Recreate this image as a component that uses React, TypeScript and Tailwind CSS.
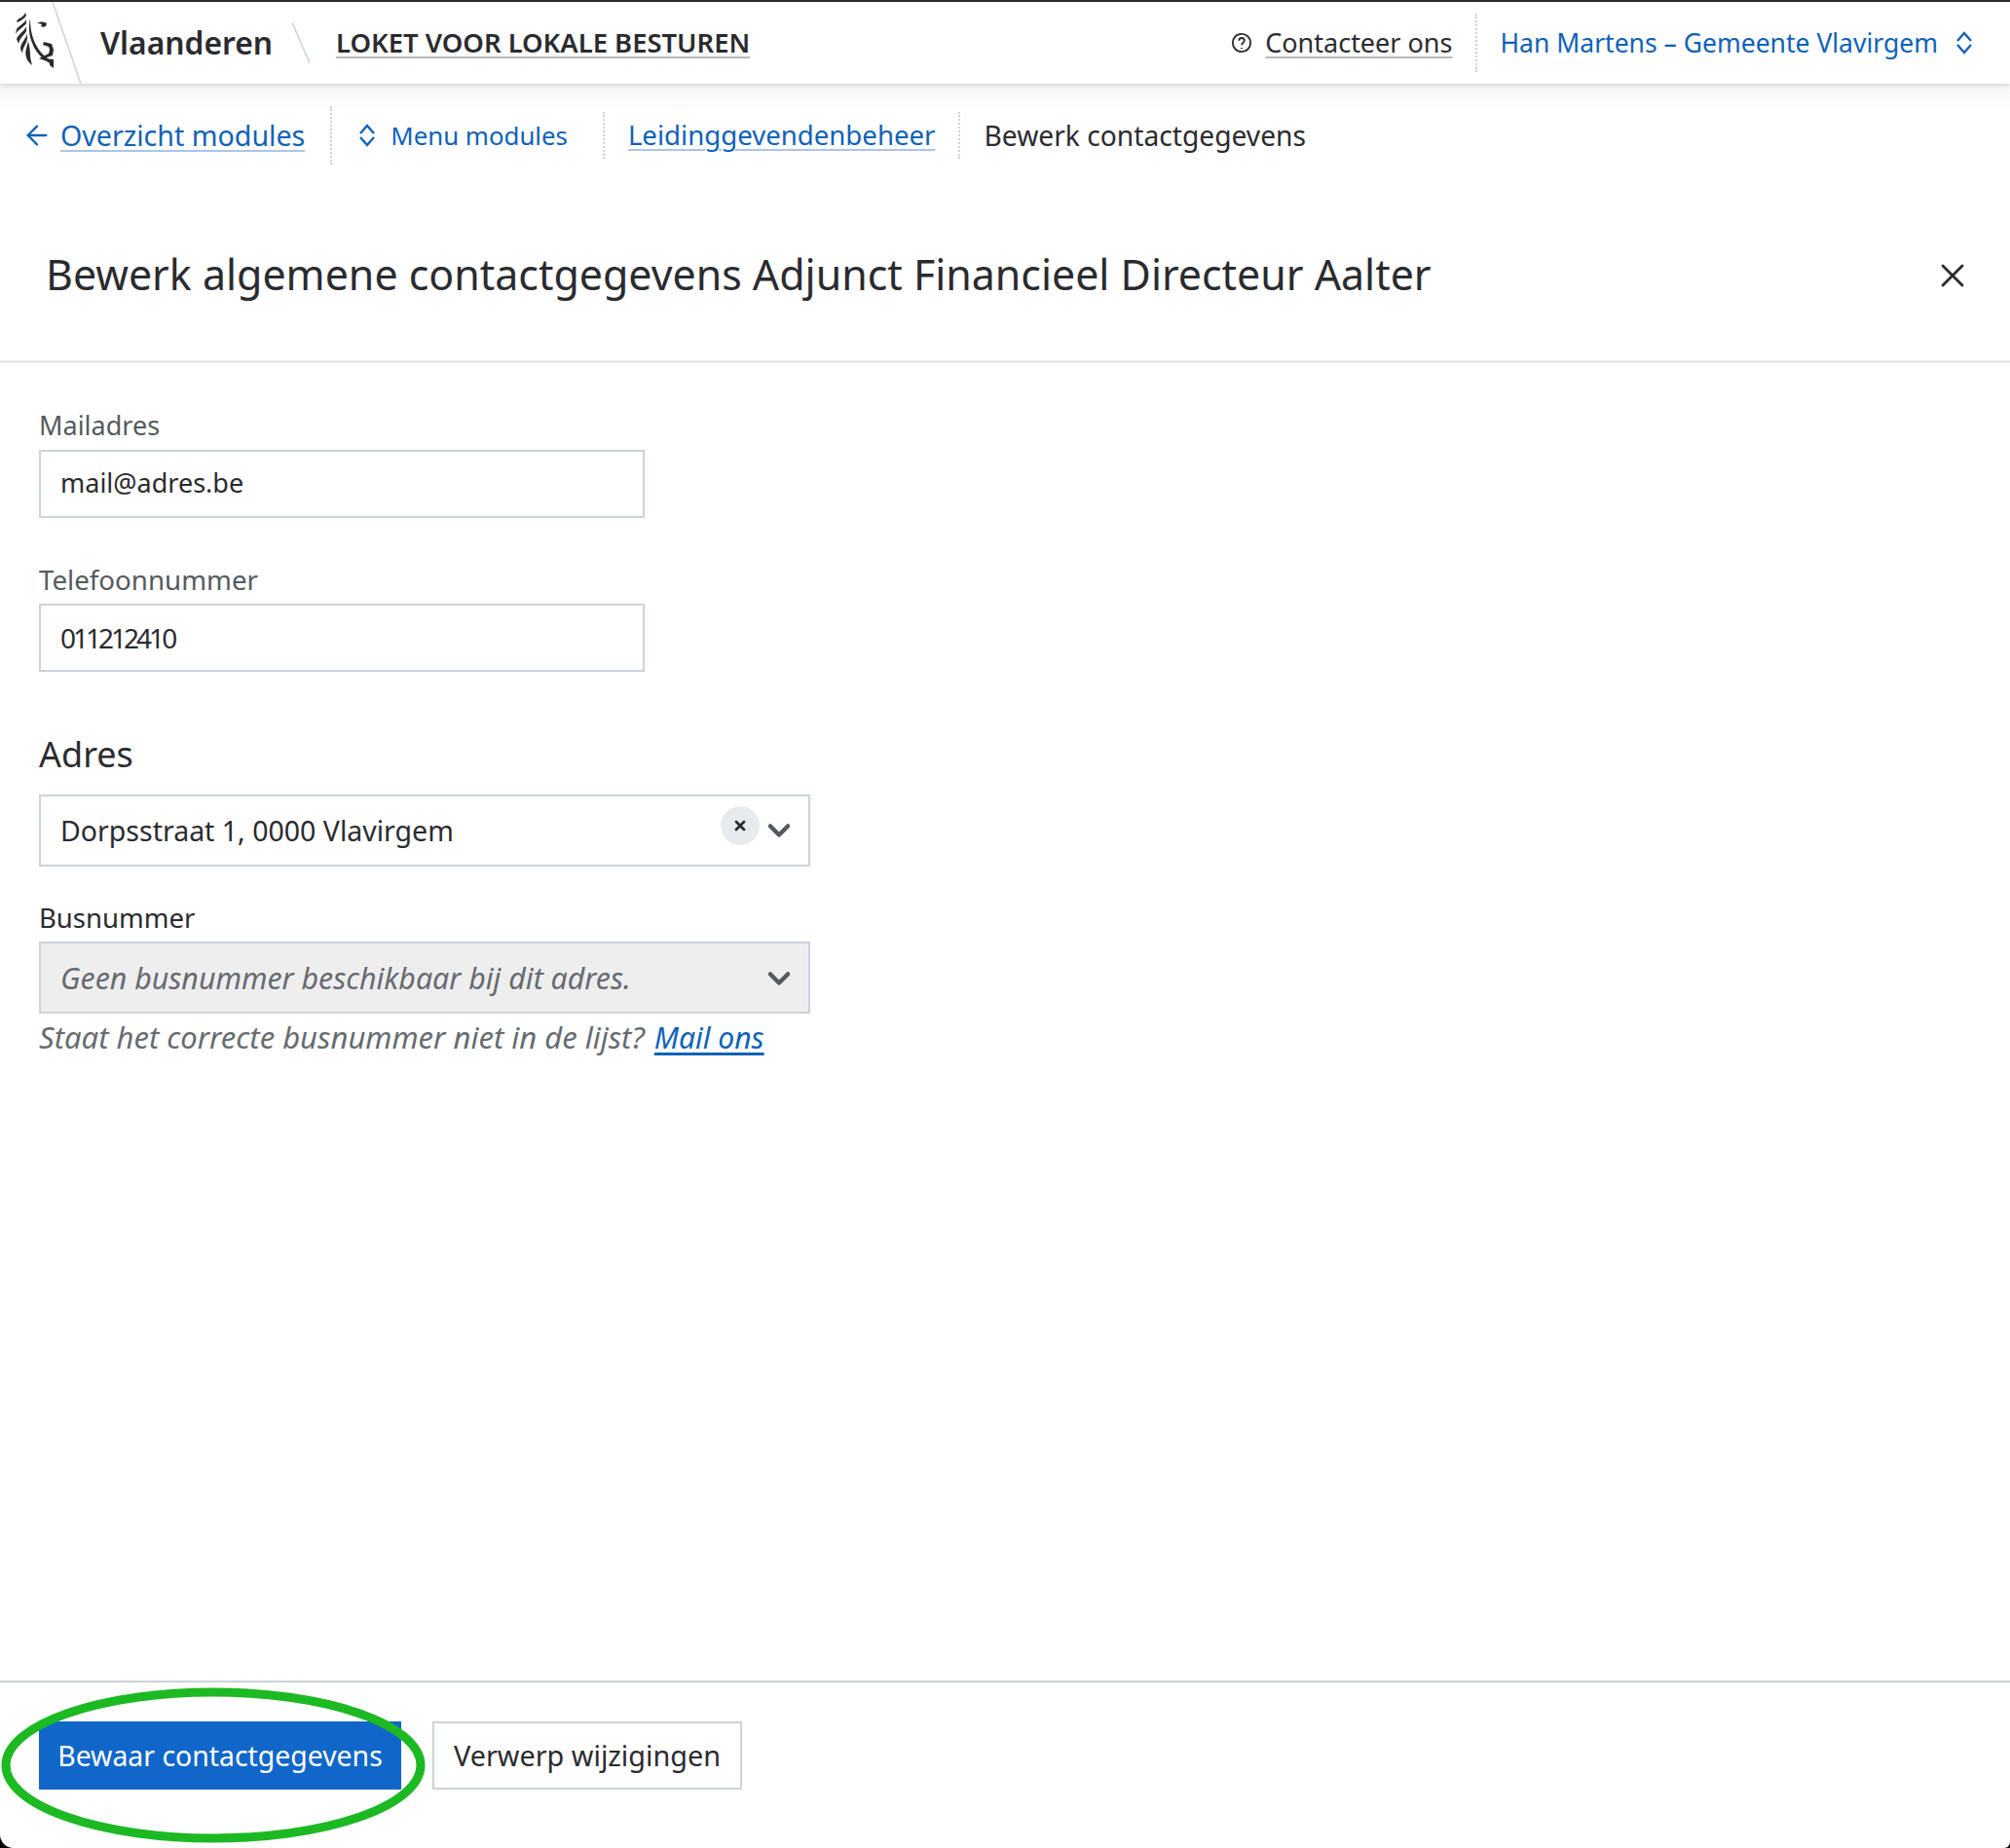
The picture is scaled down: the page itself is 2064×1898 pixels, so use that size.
import { ArrowLeft, ChevronDown, X } from 'lucide-react';

const font = "font-['Noto_Sans',sans-serif]";

const UpDown = ({ className = '' }: { className?: string }) => (
  <svg viewBox="0 0 18 26" fill="none" stroke="currentColor" strokeWidth="2.4" className={`h-[26px] w-[18px] shrink-0 ${className}`}>
    <path d="M2 11l7-8 7 8M2 15l7 8 7-8" />
  </svg>
);

const Slash = ({ height, width }: { height: number; width: number }) => (
  <svg width={width} height={height} className="shrink-0" stroke="#cbd2da" strokeWidth="1.5">
    <line x1="0" y1="0" x2={width} y2={height} />
  </svg>
);

// Vlaamse leeuw, drawn by eye
const Logo = () => (
  <svg viewBox="10 10 50 70" className="h-[70px] w-[50px] shrink-0" fill="#2a2b2f">
    <path d="M26 14c-1 3-4 5-8 7l-1 3c4-1 8-4 10-7z" />
    <path d="M27 21c-2 4-7 6-10 10l-1 5c3-5 8-7 11-11z" />
    <path d="M27 28c-2 5-8 8-10 13l2 5c1-6 6-9 8-13z" />
    <path d="M28 35c-1 6-7 10-7 16l2 5c0-7 5-10 5-16z" />
    <path d="M29 43c-1 6-4 10-2 17 1 4 4 6 6 8-1-4-2-7-2-11 0-5-1-9-2-14z" />
    <path d="M31 20c-2 9-1 18 2 25 3 8 8 14 14 18l8 6v-3l-6-5c-7-5-11-11-14-18-3-7-4-15-4-23z" />
    <path d="M38 25c3-2 7-2 10 0l-1 3c-2 1-4 1-5 0l1-2c-2-1-3-1-5-1z" />
    <path d="M45 44l8 2 2 6-1 6-9 3 10 1v9l-4-3v-3l-11-4 10-5 1-4-1-3-6-2z" />
  </svg>
);

const Divider = ({ h }: { h: string }) => <div className={`border-l-2 border-dotted border-[#cbd2da] ${h}`} />;

const App = () => {
  return (
    <div className="bg-black">
      <div className={`${font} relative flex h-[1898px] flex-col overflow-hidden rounded-bl-[14px] rounded-br-[6px] bg-white text-[28px] text-[#2a2b2f]`}>
        <header className="relative z-10 flex h-[86px] shrink-0 items-center border-t-2 border-[#2a2b2f] bg-white pl-[10px] pr-[38px] shadow-[0_2px_6px_rgba(0,0,0,0.14)]">
          <Logo />
          <div className="ml-[-6px]"><Slash width={29} height={84} /></div>
          <span className="ml-5 text-[31.8px] font-semibold">Vlaanderen</span>
          <div className="ml-5"><Slash width={18} height={42} /></div>
          <a className="ml-[27px] text-[27.4px] font-semibold uppercase underline decoration-[#b9b9b9] decoration-2 underline-offset-4">Loket voor lokale besturen</a>
          <div className="ml-auto flex items-center">
            <svg viewBox="0 0 24 24" fill="none" stroke="currentColor" strokeWidth="2" className="mr-[13px] h-[22px] w-[22px]">
              <circle cx="12" cy="12" r="10" />
              <path d="M9 9.500c0-4 6-4 6 0 0 2.500-3 2.500-3 5M12 17.500v1" />
            </svg>
            <a className="text-[27px] underline decoration-[#b9b9b9] decoration-2 underline-offset-4">Contacteer ons</a>
            <div className="ml-6 mr-[23px]"><Divider h="h-[60px]" /></div>
            <span className="pt-[2px] text-[26.5px] text-[#0f62b8]">Han Martens – Gemeente Vlavirgem</span>
            <UpDown className="ml-[18px] text-[#0f62b8]" />
          </div>
        </header>

        <nav className="flex h-[106px] shrink-0 items-center bg-gradient-to-b from-[#f7f7f7] to-white to-30% pl-[22px] text-[#0f62b8]">
          <ArrowLeft className="mr-2 h-8 w-8" strokeWidth={1.75} />
          <a className="text-[28.6px] underline decoration-[#a9c6e6] decoration-2 underline-offset-4">Overzicht modules</a>
          <div className="ml-[26px] mr-[27px]"><Divider h="h-[60px]" /></div>
          <UpDown className="mr-[15px]" />
          <span className="text-[25.8px]">Menu modules</span>
          <div className="ml-9 mr-6"><Divider h="h-12" /></div>
          <a className="text-[27.6px] underline decoration-[#a9c6e6] decoration-2 underline-offset-4">Leidinggevendenbeheer</a>
          <div className="mx-6"><Divider h="h-12" /></div>
          <span className="text-[28.2px] text-[#2a2b2f]">Bewerk contactgegevens</span>
        </nav>

        <div className="flex h-[181px] shrink-0 items-center justify-between border-b-[3px] border-[#e8ebee] pl-[47px] pr-[39px] pt-[2px]">
          <h1 className="text-[42.9px] font-normal">Bewerk algemene contactgegevens Adjunct Financieel Directeur Aalter</h1>
          <X className="mt-[2px] h-10 w-10" strokeWidth={1.75} />
        </div>

        <main className="flex flex-1 flex-col px-10 pt-[44px]">
          <label className="text-[27px] text-[#555a60]">Mailadres</label>
          <div className="mt-1 flex h-[70px] w-[622px] items-center border-2 border-[#cbd2da] px-5 text-[27px]">mail@adres.be</div>
          <label className="mt-[43px] text-[27.7px] text-[#555a60]">Telefoonnummer</label>
          <div className="mt-1 flex h-[70px] w-[622px] items-center border-2 border-[#cbd2da] px-5 tracking-[-3px]">011212410</div>
          <h2 className="mt-[58px] text-[36px] font-normal">Adres</h2>
          <div className="relative mt-[14px] flex h-[74px] w-[792px] items-center border-2 border-[#cbd2da] px-5 text-[28.5px]">
            Dorpsstraat 1, 0000 Vlavirgem
            <span className="absolute left-[698px] top-[10px] flex h-10 w-10 items-center justify-center rounded-full bg-[#e8ebee]">
              <X className="h-4 w-4" strokeWidth={4} />
            </span>
            <ChevronDown className="absolute right-[12px] top-[17px] h-9 w-9 text-[#555a60]" strokeWidth={3} />
          </div>
          <label className="mt-8 text-[27.5px]">Busnummer</label>
          <div className="relative mt-1 flex h-[74px] w-[792px] items-center border-2 border-[#cbd2da] bg-[#eeeeee] px-5 text-[30.3px] italic text-[#666b70]">
            Geen busnummer beschikbaar bij dit adres.
            <ChevronDown className="absolute right-[12px] top-[18px] h-9 w-9 text-[#555a60]" strokeWidth={3} />
          </div>
          <p className="mt-[3px] text-[31px] italic leading-[42px] text-[#666b70]">
            Staat het correcte busnummer niet in de lijst?{' '}
            <a className="ml-[2px] text-[30px] text-[#0f62b8] underline underline-offset-4">Mail ons</a>
          </p>
        </main>

        <footer className="flex h-[172px] shrink-0 gap-8 border-t-2 border-[#cbd2da] px-10 pt-10">
          <button className="flex h-[70px] w-[372px] items-center justify-center bg-[#1167c9] text-[28.4px] text-white">Bewaar contactgegevens</button>
          <button className="flex h-[70px] w-[318px] items-center justify-center border-2 border-[#cbd2da] text-[28.8px]">Verwerp wijzigingen</button>
        </footer>

        <svg className="absolute left-0 top-[1733px] h-[160px] w-[440px]" fill="none" stroke="#1cb923" strokeWidth="9">
          <ellipse cx="219" cy="80" rx="213" ry="75" />
        </svg>
      </div>
    </div>
  );
};

export default App;
